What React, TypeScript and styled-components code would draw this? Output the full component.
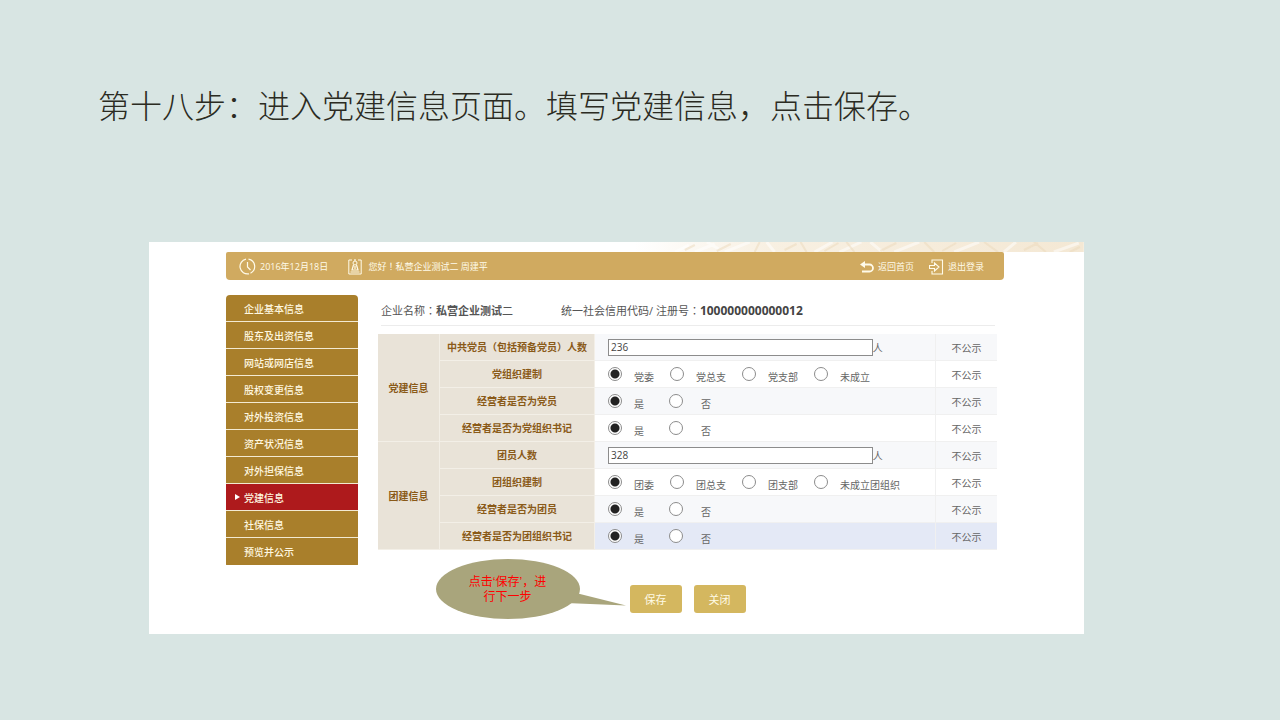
import React from "react";
import styled, { createGlobalStyle, css } from "styled-components";

const GlobalStyle = createGlobalStyle`
  *, *::before, *::after { box-sizing: border-box; }
  body {
    margin: 0;
    min-height: 100vh;
    background: #d8e5e3;
    font-family: "Open Sans", "Noto Sans CJK SC", sans-serif;
    font-size: 10px;
    color: #666;
  }
`;

const Slide = styled.main`
  padding: 79px 196px 86px 149px;
`;

const Title = styled.h1`
  margin: 0 -60px 113px -51px;
  font-family: "Noto Sans CJK SC", sans-serif;
  font-size: 32px;
  line-height: 50px;
  font-weight: 300;
  color: #2b2b22;
`;

const Screen = styled.section`
  background: #fff;
  padding-bottom: 21px;
`;

const Banner = styled.svg`
  display: block;
  width: 48%;
  height: 10px;
  margin-left: auto;
`;

const TopBar = styled.header`
  display: flex;
  align-items: center;
  height: 28px;
  margin: 0 80px 15px 77px;
  padding: 1px 20px 0 13px;
  border-radius: 2px 2px 4px 4px;
  background: #d0aa60;
  color: #fffbea;
  font-size: 9px;
  line-height: 12px;
`;

const BarItem = styled.span`
  display: flex;
  align-items: center;
  gap: 4px;
  margin-right: 20px;
  white-space: pre;
`;

const BarLink = styled.a`
  display: flex;
  align-items: center;
  gap: 4px;
  margin-left: 15px;
  color: inherit;
  text-decoration: none;
`;

const Spacer = styled.span`
  flex: 1;
`;

/* Punctuation centred in its em square */
const Mark = styled.span`
  font-family: "Noto Sans CJK TC", sans-serif;
`;

const Columns = styled.div`
  display: grid;
  grid-template-columns: 132px 1fr;
  gap: 20px;
  margin: 0 87px 0 77px;
`;

const Menu = styled.nav`
  display: flex;
  flex-direction: column;
  align-self: start;
  border-radius: 4px 4px 1px 1px;
  overflow: hidden;
`;

const MenuLink = styled.a<{ $active?: boolean }>`
  display: flex;
  align-items: center;
  gap: 4px;
  height: 27px;
  padding-left: ${(p) => (p.$active ? 9 : 18)}px;
  border-bottom: 1px solid #f3ead2;
  background: ${(p) => (p.$active ? "#ae1a1c" : "#a97f2b")};
  color: #fff8e0;
  font-size: 10px;
  font-weight: 500;
  text-decoration: none;
  &:last-child { border-bottom-color: #a97f2b; }
`;

const Arrow = styled.span`
  border: 3px solid transparent;
  border-left: 5px solid #fff;
  border-right: 0;
`;

const Info = styled.div`
  display: flex;
  gap: 48px;
  margin: 0 2px 8px 3px;
  padding: 7px 0 6px;
  border-bottom: 1px solid #ececec;
  font-size: 11px;
  line-height: 17px;
  color: #555;
  white-space: pre;
`;

const Code = styled.strong`
  font-size: 12px;
  color: #444;
`;

const Form = styled.table`
  width: 100%;
  table-layout: fixed;
  border-collapse: separate;
  border-spacing: 0;
`;

const headCell = css`
  padding: 0;
  background: #e9e3d8;
  border-right: 1px solid #f3efe7;
  border-bottom: 1px solid #f3efe7;
  color: #8a5a18;
  font-size: 10px;
  line-height: 14px;
  font-weight: 700;
  text-align: center;
`;

const GroupHead = styled.th`
  ${headCell}
`;

const RowHead = styled.th`
  ${headCell}
  white-space: nowrap;
`;

const Row = styled.tr<{ $tone: string }>`
  height: 27px;
  background: ${(p) => p.$tone};
`;

const Cell = styled.td`
  padding: 0 0 0 13px;
  border-bottom: 1px solid #f0f0f0;
`;

const State = styled.td`
  padding: 0;
  border-left: 1px solid #f0f0f0;
  border-bottom: 1px solid #f0f0f0;
  text-align: center;
`;

const Field = styled.label`
  display: flex;
  align-items: center;
`;

const NumberInput = styled.input`
  width: 81%;
  height: 17px;
  padding: 0 2px;
  border: 1px solid #8c8c8c;
  border-radius: 0;
  background: #fff;
  color: #444;
  font: inherit;
  outline: none;
`;

const Options = styled.fieldset<{ $gap: number }>`
  display: flex;
  gap: ${(p) => p.$gap}px;
  margin: 0;
  padding: 2px 0 0;
  border: 0;
`;

const Option = styled.label<{ $gap: number }>`
  display: flex;
  align-items: baseline;
  gap: ${(p) => p.$gap}px;
  line-height: 14px;
`;

const Radio = styled.input`
  appearance: none;
  flex: none;
  width: 14px;
  height: 14px;
  margin: 0;
  border: 1px solid #8c8c8c;
  border-radius: 50%;
  background: #fff;
  &:checked { background: radial-gradient(circle, #222 0 4px, #fff 5px); }
`;

const Footer = styled.div`
  display: flex;
  justify-content: center;
  margin-top: 35px;
`;

const Actions = styled.div`
  position: relative;
  display: flex;
  gap: 12px;
`;

const Button = styled.button`
  width: 52px;
  height: 28px;
  padding: 0;
  border: 0;
  border-radius: 3px;
  background: #d4b75f;
  color: #fffbe6;
  font: 400 11px "Noto Sans CJK SC", sans-serif;
`;

const Callout = styled.div`
  position: absolute;
  right: 100%;
  top: -26px;
  width: 194px;
  height: 60px;
`;

const Bubble = styled.svg`
  position: absolute;
  inset: 0;
`;

const CalloutText = styled.p`
  position: relative;
  width: 144px;
  margin: 0;
  padding-top: 16px;
  font: 12px/15px "Liberation Sans", "Noto Sans CJK SC", sans-serif;
  color: #f00;
  text-align: center;
`;

const menu = [
  "企业基本信息", "股东及出资信息", "网站或网店信息", "股权变更信息", "对外投资信息",
  "资产状况信息", "对外担保信息", "党建信息", "社保信息", "预览并公示",
];

type Item = { name: string; value?: string; options?: string[] };

const groups: { title: string; items: Item[] }[] = [
  {
    title: "党建信息",
    items: [
      { name: "中共党员（包括预备党员）人数", value: "236" },
      { name: "党组织建制", options: ["党委", "党总支", "党支部", "未成立"] },
      { name: "经营者是否为党员", options: ["是", "否"] },
      { name: "经营者是否为党组织书记", options: ["是", "否"] },
    ],
  },
  {
    title: "团建信息",
    items: [
      { name: "团员人数", value: "328" },
      { name: "团组织建制", options: ["团委", "团总支", "团支部", "未成立团组织"] },
      { name: "经营者是否为团员", options: ["是", "否"] },
      { name: "经营者是否为团组织书记", options: ["是", "否"] },
    ],
  },
];

const toneOf = (group: number, row: number) => {
  if (group === 1 && row === 3) return "#e4e9f6";
  return row % 2 === 0 ? "#f7f8fa" : "#fff";
};

function ItemControl({ item }: { item: Item }) {
  if (item.value !== undefined) {
    return (
      <Field>
        <NumberInput defaultValue={item.value} aria-label={item.name} />人
      </Field>
    );
  }
  const options = item.options ?? [];
  const binary = options.length === 2;
  return (
    <Options $gap={binary ? 25 : 16} aria-label={item.name}>
      {options.map((text, i) => (
        <Option key={text} $gap={binary && i === 1 ? 18 : 12}>
          <Radio type="radio" name={item.name} defaultChecked={i === 0} />
          {text}
        </Option>
      ))}
    </Options>
  );
}

const ClockIcon = () => (
  <svg width="17" height="17" viewBox="0 0 17 17" fill="none" stroke="#fffbea" strokeWidth="1.2">
    <path d="M7 1.1A7.5 7.5 0 1 0 10 15.8M11.5 15.2A7.5 7.5 0 0 0 9.5 1.1" />
    <path d="M8.5 4v5l3 3" />
  </svg>
);

const BadgeIcon = () => (
  <svg width="14" height="16" viewBox="0 0 14 16" fill="none" stroke="#fffbea">
    <path d="M4 1H.8v14h12.4V1H10" />
    <circle cx="7" cy="4" r="2" />
    <path d="M5.500 6 4 11h6L8.500 6M2.500 13h9M7 0v2M7 7v3" strokeWidth="1.2" />
  </svg>
);

const BackIcon = () => (
  <svg width="14" height="12" viewBox="0 0 14 12" fill="none">
    <path d="M0 3.500 5 0v7z" fill="#fffbea" />
    <path d="M4 3.500h5.500a3.500 3.500 0 0 1 0 7H2" stroke="#fffbea" strokeWidth="1.800" />
  </svg>
);

const ExitIcon = () => (
  <svg width="15" height="16" viewBox="0 0 15 16" fill="none" stroke="#fffbea" strokeWidth="1.100">
    <path d="M3 4V1h10.500v14H3v-3" />
    <path d="M0.500 6.500h5V4l4.500 4-4.500 4V9.500h-5z" />
  </svg>
);

export default function App() {
  return (
    <>
      <GlobalStyle />
      <Slide>
        <Title>第十八步：进入党建信息页面。填写党建信息，点击保存。</Title>
        <Screen>
          <Banner viewBox="0 0 450 10" preserveAspectRatio="none" aria-hidden="true">
            <defs>
              <linearGradient id="fade">
                <stop offset="0" stopColor="#f8f0e2" stopOpacity="0" />
                <stop offset="0.3" stopColor="#f8f0e2" />
                <stop offset="1" stopColor="#f4e8d4" />
              </linearGradient>
            </defs>
            <rect width="450" height="10" fill="url(#fade)" />
            <path
              d="M40 10l14-7M60 10l20-8M72 0l12 7M90 10l25-10M140 10l-8-10M180 10l18-10M205 10l22-10M236 0l12 10M260 10l25-10M320 10l25-10M370 10l12-10M420 10l25-9"
              stroke="#fff" strokeWidth="3" fill="none" opacity="0.5"
            />
            <path
              d="M50 8l10-5M82 9l14-7M120 10l5-10M150 8l12-6M172 10l-6-10M190 9l14-8M212 0l8 10M246 9l16-8M290 0l10 10M308 9l14-8M350 0l14 10M390 8l14-7M400 0l12 10M436 10l10-5"
              stroke="#ecdabb" strokeWidth="2" fill="none" opacity="0.5"
            />
          </Banner>
          <TopBar>
            <BarItem><ClockIcon />2016年12月18日</BarItem>
            <BarItem><BadgeIcon /><span> 您好<Mark>！</Mark>私营企业测试二 周建平</span></BarItem>
            <Spacer />
            <BarLink href="#home"><BackIcon />返回首页</BarLink>
            <BarLink href="#logout"><ExitIcon />退出登录</BarLink>
          </TopBar>
          <Columns>
            <Menu>
              {menu.map((text) => {
                const active = text === "党建信息";
                return (
                  <MenuLink key={text} href="#menu" $active={active}>
                    {active && <Arrow />}
                    {text}
                  </MenuLink>
                );
              })}
            </Menu>
            <div>
              <Info>
                <span>企业名称<Mark>：</Mark><strong>私营企业测试</strong>二</span>
                <span>统一社会信用代码/ 注册号<Mark>：</Mark><Code>100000000000012</Code></span>
              </Info>
              <Form>
                <colgroup>
                  <col style={{ width: 62 }} />
                  <col style={{ width: 155 }} />
                  <col />
                  <col style={{ width: 62 }} />
                </colgroup>
                <tbody>
                  {groups.map((group, g) =>
                    group.items.map((item, r) => (
                      <Row key={item.name} $tone={toneOf(g, r)}>
                        {r === 0 && <GroupHead rowSpan={4} scope="rowgroup">{group.title}</GroupHead>}
                        <RowHead scope="row">{item.name}</RowHead>
                        <Cell><ItemControl item={item} /></Cell>
                        <State>不公示</State>
                      </Row>
                    )),
                  )}
                </tbody>
              </Form>
              <Footer>
                <Actions>
                  <Callout>
                    <Bubble width="194" height="60" viewBox="0 0 194 60" fill="#a9a57c">
                      <ellipse cx="72" cy="30" rx="72" ry="30" />
                      <path d="M140 34 190 46.500 130 44z" />
                    </Bubble>
                    <CalloutText>点击‘保存’，进<br />行下一步</CalloutText>
                  </Callout>
                  <Button type="button">保存</Button>
                  <Button type="button">关闭</Button>
                </Actions>
              </Footer>
            </div>
          </Columns>
        </Screen>
      </Slide>
    </>
  );
}
